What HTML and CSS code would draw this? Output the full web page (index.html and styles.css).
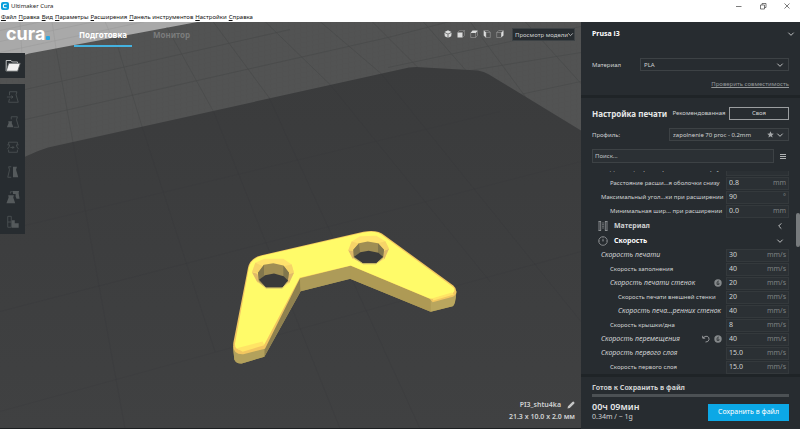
FILE: index.html
```html
<!DOCTYPE html>
<html lang="ru">
<head>
<meta charset="utf-8">
<title>Ultimaker Cura</title>
<link rel="stylesheet" href="styles.css">
</head>
<body>
<div class="app">
  <header class="titlebar">
    <svg class="app-icon" viewBox="0 0 8 8"><rect width="8" height="8" rx="2" fill="#0a9fdc"/><path d="M5.6 2.2H3.8Q2.3 2.2 2.3 4T3.8 5.8H5.6" fill="none" stroke="#fff" stroke-width="1.1"/></svg>
    <span class="app-title">Ultimaker Cura</span>
    <div class="window-controls">
      <button type="button" aria-label="Свернуть"><svg viewBox="0 0 8 8"><path d="M1 4.5H6.5"/></svg></button>
      <button type="button" aria-label="Развернуть"><svg viewBox="0 0 8 8"><path d="M1.5 3H5.5V7H1.5ZM3 3V1.5H7V5.5H5.5"/></svg></button>
      <button type="button" aria-label="Закрыть"><svg viewBox="0 0 8 8"><path d="M1.5 1.5L6.5 6.5M6.5 1.5L1.5 6.5"/></svg></button>
    </div>
  </header>
  <nav class="menubar">
    <a href="#"><u>Ф</u>айл</a><a href="#"><u>П</u>равка</a><a href="#"><u>В</u>ид</a><a href="#"><u>П</u>араметры</a><a href="#"><u>Р</u>асширения</a><a href="#"><u>П</u>анель инструментов</a><a href="#"><u>Н</u>астройки</a><a href="#"><u>С</u>правка</a>
  </nav>

  <div class="workspace">
    <main class="viewport">
      <svg class="scene" viewBox="0 0 581 407" preserveAspectRatio="xMidYMid slice">
        <defs>
          <linearGradient id="plate" x1="0" y1="0" x2="0" y2="1"><stop offset="0" stop-color="#3a3b3c"/><stop offset="1" stop-color="#404142"/></linearGradient>
          <pattern id="mesh" width="6" height="5" patternUnits="userSpaceOnUse" patternTransform="skewY(-12)"><path d="M0 0H6M0 0L1 5" fill="none" stroke="#4d4e4e" stroke-width=".4"/></pattern>
        </defs>
        <rect width="581" height="407" fill="#525353"/>
        <rect width="581" height="140" fill="url(#mesh)"/>
        <path d="M0 0H200L29 32Q14 36 0 44Z" fill="#a9a9a9"/>
        <path d="M0 9L42 0M0 20L95 0M0 31L145 0M52 0L56 27M105 0L112 16M20 0L22 34" fill="none" stroke="#989898" stroke-width=".5"/>
        <path d="M56 27L73 121M115 16L142 105M167 6L214 91M213 0L269 76M265 0L330 63M320 0L381 52M372 0L418 46M423 0L466 49M470 0L526 76M525 0L581 62M25 98L388 16L450 0M25 68L290 8M388 46L581 5M470 49L581 31M520 73L581 60" fill="none" stroke="#474848" stroke-width=".6"/>
        <path d="M0 149Q28 132 48 126L409 46Q416 45 425 46L478 49Q484 50 489 53L581 109V407H0Z" fill="url(#plate)"/>
        <path d="M73 121L125 407M142 105L215 330M214 91L340 407M269 76L420 407M330 63L490 260M381 52L581 300M0 290L581 140M0 390L581 230M0 210L500 90" fill="none" stroke="#363738" stroke-width=".6" opacity=".35"/>
        <g transform="translate(220 198) scale(.33333)">
          <path d="M39 380L43 420Q48 433 65 432L133 412L242 215L390 178L632 277L698 260Q706 256 709 215L640 190L400 110L230 150L120 340Z" fill="#ad9a56"/>
          <path d="M133 376L240 176L242 215L133 412Z" fill="#8f8150"/>
          <path d="M240 176L392 138V178L242 215Z" fill="#ad9b59"/>
          <path d="M392 138L632 238V277L390 178Z" fill="#ae9a55"/>
          <path d="M632 240L709 216Q707 256 698 260L632 277Z" fill="#b9a65e"/>
          <path d="M39 382Q46 403 65 400L133 380V412L65 432Q48 433 43 420Z" fill="#b3a15c"/>
          <path d="M40 370L84 145Q90 115 125 107L430 37Q472 29 494 48L700 198Q712 208 708 223Q704 232 690 234L638 248L629 238L392 139L240 176L135 388L70 404Q36 406 40 370Z" fill="#f2c660"/>
          <path d="M45 372L87 143Q94 117 127 109L432 39Q470 32 491 50L698 202Q709 211 698 221L638 238L629 237L392 138L239 175L133 375L66 391Q43 392 45 372Z" fill="#fffb69"/>
          <path d="M50 386L128 366L133 377L68 397ZM638 236L696 219L702 225L640 243Z" fill="#ffe465"/>
          <path d="M96 158L106 130L133 118L190 118L215 135L222 160L207 191L188 205H137L112 188Z" fill="#ffe26d"/>
          <path d="M96 158L112 163L117 180L112 188ZM222 160L207 163L202 182L207 191Z" fill="#e0ba69"/>
          <path d="M106 130L132 142L112 160L96 158ZM215 135L190 140L207 163L222 160Z" fill="#f6d468"/>
          <path d="M114 160L132 136L160 131L190 138L207 160L202 190L184 205H138L116 188Z" fill="#a08e54"/>
          <path d="M114 160L132 136V168L117 184ZM190 138L207 160L203 187L190 171Z" fill="#81764d"/>
          <path d="M117 181L135 167L162 162L191 170L204 183L188 204H138Z" fill="#393a3a"/>
          <path d="M117 187L138 206H187L202 188" fill="none" stroke="#d4c36d" stroke-width="3"/>
          <path d="M385 92L395 66L420 50L469 49L496 65L507 88L493 119L469 132H429L398 118Z" fill="#ffe26d"/>
          <path d="M385 92L400 94L405 108L398 118ZM507 88L492 94L489 112L493 119Z" fill="#e0ba69"/>
          <path d="M395 66L419 73L400 94L385 92ZM496 65L473 71L491 94L507 88Z" fill="#f6d468"/>
          <path d="M400 91L417 71L443 66L474 71L492 91L489 117L468 132H428L401 116Z" fill="#a08e54"/>
          <path d="M400 91L417 71L420 100L402 112ZM474 71L492 91L489 115L474 101Z" fill="#81764d"/>
          <path d="M402 112L421 98L446 94L475 100L489 112L469 131H429Z" fill="#393a3a"/>
          <path d="M402 116L429 133H468L489 116" fill="none" stroke="#d4c36d" stroke-width="3"/>
        </g>
      </svg>

      <div class="stage-bar">
        <span class="logo">cura<i></i></span>
        <nav class="tabs">
          <a class="tab active" href="#">Подготовка</a>
          <a class="tab" href="#">Монитор</a>
        </nav>
        <div class="views">
          <button type="button" aria-label="3D"><svg viewBox="0 0 8 8"><path d="M4 .3L7.5 2L4 3.7L.5 2ZM.4 2.7L3.6 4.3V7.8L.8 6.2ZM7.6 2.7L4.4 4.3V7.8L7.2 6.2Z" fill="#dcdddd"/></svg></button>
          <button type="button" aria-label="Спереди"><svg viewBox="0 0 8 8"><path d="M.5 2.5H5.5V7.5H.5Z" fill="#dcdddd"/><path d="M.5 2.5L2.5.5H7.5V5.5L5.5 7.5M5.5 2.5L7.5.5" fill="none" stroke="#999" stroke-width=".5"/></svg></button>
          <button type="button" aria-label="Сверху"><svg viewBox="0 0 8 8"><path d="M.5 3L2.5.5H7.8L5.8 3Z" fill="#dcdddd"/><path d="M.7 3V7.5H5.6V3M5.6 7.5L7.5 5.5V1" fill="none" stroke="#aaa" stroke-width=".5"/></svg></button>
          <button type="button" aria-label="Слева"><svg viewBox="0 0 8 8"><path d="M.7.5L3 2.3V7.7L.7 5.5Z" fill="#dcdddd"/><path d="M.7.5H5L7.3 2.3V7.6H3V2.3H7.3" fill="none" stroke="#aaa" stroke-width=".5"/></svg></button>
          <button type="button" aria-label="Справа"><svg viewBox="0 0 8 8"><path d="M5.2 2.5L7.5.5V5.5L5.2 7.5Z" fill="#dcdddd"/><path d="M5.2 2.5H.7V7.5H5.2M.7 2.5L2.7.5H7.5" fill="none" stroke="#aaa" stroke-width=".5"/></svg></button>
        </div>
        <div class="select view-select">
          <select aria-label="Режим просмотра"><option>Просмотр модели</option></select>
          <svg class="chevron" viewBox="0 0 6 6"><path d="M1 2L3 4L5 2"/></svg>
        </div>
      </div>

      <div class="toolbar">
        <button class="tool open" type="button" aria-label="Открыть файл"><svg viewBox="0 0 16 16"><path d="M1.2 13V2.5H6L7.3 4H12.5V5" fill="none" stroke="#e5e6e6"/><path d="M3.7 5.2H15.3L12.7 13.2H1.2Z" fill="#f1f1f1"/></svg></button>
        <div class="tool-group">
          <button class="tool" type="button" disabled aria-label="Переместить"><svg viewBox="0 0 16 16"><path d="M4 6V2H12.5L11.5 5.5L14 14H3L4 10M1 8H8M6 6.5L8 8L6 9.5"/></svg></button>
          <button class="tool" type="button" disabled aria-label="Масштаб"><svg viewBox="0 0 16 16"><path d="M6 5V2H13L12 5.5L14.5 14H9"/><path class="solid" d="M2.5 7H7L6.5 9L8.5 14H1L3 9Z"/></svg></button>
          <button class="tool" type="button" disabled aria-label="Повернуть"><svg viewBox="0 0 16 16"><path d="M3 5V2.5H13V5M3 11V14H13V11M1.5 5.5H4L3.5 8L1.5 10.5M14.5 5.5H12L12.5 8L14.5 10.5M5 8.5H9M7.5 7L9 8.5L7.5 10"/></svg></button>
          <button class="tool" type="button" disabled aria-label="Зеркало"><svg viewBox="0 0 16 16"><path d="M6 2H3L4 5.5L2 14H6"/><path class="solid" d="M8 2H12.5L11.5 5.5L14 14H8Z"/></svg></button>
          <button class="tool" type="button" disabled aria-label="Настройки модели"><svg viewBox="0 0 16 16"><path class="solid" d="M2.5 6H9L8.3 8.5L10.5 15H.5L3 8.5ZM8 1H15L14.4 3.5L15.5 10H12L11 7.5V4.5H8Z"/><path d="M5 4V2H8"/></svg></button>
          <button class="tool" type="button" disabled aria-label="Блокировка поддержек"><svg viewBox="0 0 16 16"><path d="M2 1.5H6V14H2ZM2 8H6"/><path class="solid" d="M6.5 6H10V9.5H14.5V14.5H6.5Z"/></svg></button>
        </div>
      </div>

      <div class="model-info">
        <div class="model-name">PI3_shtu4ka <svg viewBox="0 0 8 8"><path d="M.5 7.5L1 5.2L5.3.9Q6.2 0 7.1.9T7.1 2.7L2.8 7Z" fill="#c5c6c6"/></svg></div>
        <div>21.3 x 10.0 x 2.0 мм</div>
      </div>
    </main>

    <aside class="sidebar">
      <section class="machine">
        <button class="machine-name" type="button">Prusa i3 <svg class="chevron" viewBox="0 0 6 6"><path d="M1 2L3 4L5 2"/></svg></button>
        <div class="form-row">
          <label for="material">Материал</label>
          <div class="select material-select"><select id="material"><option>PLA</option></select><svg class="chevron" viewBox="0 0 6 6"><path d="M1 2L3 4L5 2"/></svg></div>
        </div>
        <a class="check-link" href="#">Проверить совместимость</a>
      </section>

      <section class="print-setup">
        <div class="setup-head">
          <h2>Настройка печати</h2>
          <button class="mode" type="button">Рекомендованная</button>
          <button class="mode selected" type="button">Своя</button>
        </div>
        <div class="form-row">
          <label for="profile">Профиль:</label>
          <div class="select profile-select"><select id="profile"><option>zapolnenie 70 proc - 0.2mm</option></select><svg class="star" viewBox="0 0 8 8"><path d="M4 .3L5.1 2.8L7.8 3L5.7 4.8L6.4 7.5L4 6.1L1.6 7.5L2.3 4.8L.2 3L2.9 2.8Z" fill="#a5a8aa"/></svg><svg class="chevron" viewBox="0 0 6 6"><path d="M1 2L3 4L5 2"/></svg></div>
        </div>
        <div class="search-row">
          <input type="text" placeholder="Поиск..." aria-label="Поиск">
          <button type="button" aria-label="Видимость настроек"><svg viewBox="0 0 6 5"><path d="M0 0H6V1H0ZM0 2H6V3H0ZM0 4H6V5H0Z" fill="#b0b3b4" shape-rendering="crispEdges"/></svg></button>
        </div>
      </section>

      <div class="settings-wrap">
        <div class="settings">
          <div class="setting d1"><label for="s0">Дистанция расшир…оболочки сверху</label><span class="field"><input id="s0" value="0.8"><span>mm</span></span></div>
          <div class="setting d1"><label for="s1">Расстояние расши...я оболочки снизу</label><span class="field"><input id="s1" value="0.8"><span>mm</span></span></div>
          <div class="setting d0"><label for="s2">Максимальный угол...ки при расширении</label><span class="field"><input id="s2" value="90"><span>°</span></span></div>
          <div class="setting d1"><label for="s3">Минимальная шир... при расширении</label><span class="field"><input id="s3" value="0.0"><span>mm</span></span></div>
          <button class="category" type="button"><svg class="cat-icon" viewBox="0 0 10 10"><path d="M1 .5V9.5M2.7 .5V9.5M7.3 .5V9.5M9 .5V9.5M.5 .5H3M7 .5H9.5M.5 9.5H3M7 9.5H9.5M4.2 2H5.8M4.2 3.7H5.8M4.2 5.3H5.8M4.2 7H5.8" /></svg>Материал<svg class="chevron" viewBox="0 0 6 6"><path d="M4 1L2 3L4 5"/></svg></button>
          <button class="category open" type="button"><svg class="cat-icon" viewBox="0 0 10 10"><circle cx="5" cy="5" r="4.3"/><path d="M5 5V2.8M5 1.2V1.8M1.3 5H2M8 5H8.7M4.5 5H5.5"/></svg>Скорость<svg class="chevron" viewBox="0 0 6 6"><path d="M1 2L3 4L5 2"/></svg></button>
          <div class="setting d0 changed"><label for="s4">Скорость печати</label><span class="field"><input id="s4" value="30"><span>mm/s</span></span></div>
          <div class="setting d1"><label for="s5">Скорость заполнения</label><span class="field"><input id="s5" value="40"><span>mm/s</span></span></div>
          <div class="setting d1 changed"><label for="s6">Скорость печати стенок</label><svg class="mark" viewBox="0 0 8 8"><circle cx="4" cy="4" r="3.7" fill="#85898b"/><path d="M5 2Q3 2 3 3.5V5.5H5V4H3" fill="none" stroke="#33383b" stroke-width=".8"/></svg><span class="field"><input id="s6" value="20"><span>mm/s</span></span></div>
          <div class="setting d2"><label for="s7">Скорость печати внешней стенки</label><span class="field"><input id="s7" value="20"><span>mm/s</span></span></div>
          <div class="setting d2 changed"><label for="s8">Скорость печа...ренних стенок</label><span class="field"><input id="s8" value="40"><span>mm/s</span></span></div>
          <div class="setting d1"><label for="s9">Скорость крышки/дна</label><span class="field"><input id="s9" value="8"><span>mm/s</span></span></div>
          <div class="setting d0 changed"><label for="s10">Скорость перемещения</label><svg class="mark" viewBox="0 0 8 8"><path d="M.7 .8V3.2H3.2M1 3Q3 .8 5.2 1.3Q7.5 2.2 7 4.7Q6.3 7.2 3.5 7" fill="none" stroke="#a0a3a5" stroke-width=".9"/></svg><svg class="mark" viewBox="0 0 8 8"><circle cx="4" cy="4" r="3.7" fill="#85898b"/><path d="M5 2Q3 2 3 3.5V5.5H5V4H3" fill="none" stroke="#33383b" stroke-width=".8"/></svg><span class="field"><input id="s10" value="40"><span>mm/s</span></span></div>
          <div class="setting d0 changed"><label for="s11">Скорость первого слоя</label><span class="field"><input id="s11" value="15.0"><span>mm/s</span></span></div>
          <div class="setting d1"><label for="s12">Скорость первого слоя</label><span class="field"><input id="s12" value="15.0"><span>mm/s</span></span></div>
        </div>
        <div class="scrollbar"></div>
      </div>

      <section class="output">
        <div class="status">Готов к Сохранить в файл</div>
        <div class="progress"></div>
        <div class="output-row">
          <div><div class="time">00ч 09мин</div><div class="usage">0.34m / ~ 1g</div></div>
          <button class="save" type="button">Сохранить в файл</button>
        </div>
      </section>
    </aside>
  </div>
</div>
</body>
</html>
```
FILE: styles.css
```css
* { box-sizing: border-box; }
body { margin: 0; font: 6px/10px "Noto Sans", "Open Sans", sans-serif; color: #d0d2d3; background: #272c30; }
button, input, select { font: inherit; color: inherit; margin: 0; padding: 0; border: 0; background: none; border-radius: 0; outline: 0; }
select { appearance: none; }
svg { display: block; flex: none; }
a { color: inherit; text-decoration: none; }

.app { display: flex; flex-direction: column; height: 100vh; }
.titlebar { display: flex; align-items: center; height: 12px; background: #fff; color: #222; }
.app-icon { width: 8px; height: 8px; margin: 0 2px 0 1px; }
.window-controls { display: flex; gap: 16px; margin-left: auto; padding-right: 9px; }
.window-controls svg { width: 8px; height: 8px; fill: none; stroke: #444; stroke-width: .7; }
.menubar { display: flex; gap: 2px; height: 10px; padding-left: 1px; background: #fff; color: #111; }
.menubar u { text-underline-offset: 1px; }

.workspace { display: flex; flex: 1; min-height: 0; }
.viewport { position: relative; flex: 1; min-width: 0; display: flex; flex-direction: column; border-bottom: 1px solid #1c1f21; }
.scene { position: absolute; width: 100%; height: 100%; }
.stage-bar, .toolbar, .model-info { position: relative; }
.stage-bar { display: flex; height: 31px; padding: 0 6px; }
.logo { display: flex; align-items: baseline; width: 68px; color: #fff; font: 700 18px/24px Inter, sans-serif; }
.logo i { width: 4px; height: 4px; margin-left: 1px; border-radius: 1px; background: #2aa6e0; }
.tabs { display: flex; gap: 16px; height: 25px; font-size: 8px; font-weight: 700; line-height: 25px; }
.tab { padding: 0 5px; color: #7b7c7c; }
.tab.active { color: #fff; border-bottom: 2px solid #44b2e0; }
.views { display: flex; gap: 5px; height: 24px; align-items: center; margin: 0 8px 0 auto; }
.views svg { width: 8px; height: 8px; }
.select { position: relative; display: flex; align-items: center; height: 13px; border: 1px solid #3d4245; }
.select select { width: 100%; height: 100%; padding-left: 3px; }
.chevron { width: 8px; height: 8px; fill: none; stroke: #c8cacb; stroke-width: .7; }
.select .chevron { position: absolute; right: 4px; pointer-events: none; }
.view-select { width: 63px; margin-top: 6px; background: #272c30; }
.view-select select { padding-left: 2px; }
.view-select .chevron { right: 0; width: 7px; height: 7px; }

.toolbar { display: flex; flex-direction: column; gap: 6px; width: 25px; }
.tool { display: flex; align-items: center; justify-content: center; width: 25px; height: 25px; background: #272c30; }
.tool svg { width: 14px; height: 14px; fill: none; stroke: #555a5c; stroke-width: .8; }
.tool.open svg { width: 16px; height: 16px; }
.tool .solid { fill: #555a5c; stroke: none; }
.model-info { margin-top: auto; padding: 0 6px 5px; font-size: 7px; font-weight: 600; line-height: 12px; text-align: right; }
.model-name { display: flex; align-items: center; justify-content: flex-end; gap: 6px; }
.model-name svg { width: 8px; height: 8px; }

.sidebar { display: flex; flex-direction: column; width: 219px; background: #272c30; }
.machine { display: flex; flex-direction: column; height: 76px; padding: 0 11px; border-bottom: 3px solid #1f2427; }
.machine-name { display: flex; align-items: center; justify-content: space-between; height: 24px; margin: 0 -6px 12px 0; font-size: 7px; font-weight: 700; color: #fff; }
.form-row { display: flex; align-items: center; justify-content: space-between; height: 13px; }
.material-select { width: 149px; }
.check-link { align-self: flex-end; margin-top: 8px; color: #94989a; text-decoration: underline; }

.print-setup { padding: 9px 11px 8px; }
.setup-head { display: flex; align-items: center; height: 13px; margin-bottom: 8px; }
.setup-head h2 { flex: 1; margin: 0; font-size: 8px; font-weight: 700; color: #e6e7e7; white-space: nowrap; }
.mode { width: 60px; height: 13px; line-height: 11px; }
.mode.selected { border: 1px solid #9b9ea0; }
.profile-select { width: 120px; background: #2b3034; }
.profile-select .star { position: absolute; right: 14px; width: 7px; height: 7px; pointer-events: none; }
.search-row { display: flex; align-items: center; justify-content: space-between; margin-top: 8px; }
.search-row input { width: 182px; height: 14px; padding-left: 2px; border: 1px solid #3d4245; background: #2b3034; }
.search-row input::placeholder { color: #c0c3c4; opacity: 1; }
.search-row button { margin-right: 3px; }
.search-row svg { width: 6px; height: 5px; }

.settings-wrap { position: relative; flex: 1; min-height: 0; }
.settings { display: flex; flex-direction: column; justify-content: flex-end; height: 100%; padding: 0 11px 0 17px; overflow: hidden; }
.setting { display: flex; flex: none; align-items: center; height: 14px; padding-left: 3px; }
.setting.d1 { padding-left: 12px; }
.setting.d2 { padding-left: 20px; }
.setting label { flex: 1; white-space: nowrap; }
.setting.changed label { font-size: 7px; font-style: italic; }
.mark { width: 8px; height: 8px; margin-right: 4px; }
.field { display: flex; align-items: center; width: 63px; height: 13px; padding: 0 2px; border: 1px solid #34393c; background: #2b3034; font-size: 7px; }
.field input { flex: 1; min-width: 0; }
.field span { color: #7d8183; }
.category { display: flex; flex: none; align-items: center; height: 15px; padding-right: 5px; font-size: 7px; font-weight: 700; }
.category .chevron { margin-left: auto; }
.category.open { color: #fff; }
.cat-icon { width: 10px; height: 10px; margin-right: 6px; fill: none; stroke: #a7aaac; stroke-width: .7; }
.scrollbar { position: absolute; top: 42px; right: 0; width: 4px; height: 34px; border-radius: 2px; background: #777b7d; }

.output { padding: 7px 11px 7px; border-top: 3px solid #1f2427; }
.status { font-size: 7px; font-weight: 700; line-height: 8px; }
.progress { height: 3px; margin: 2px 0 5px; background: #4c5154; }
.output-row { display: flex; align-items: center; justify-content: space-between; }
.time { font-size: 9px; font-weight: 600; color: #e6e7e7; }
.usage { font-size: 7px; }
.save { width: 81px; height: 17px; background: #0ca8e6; color: #fff; font-size: 7px; }
```
